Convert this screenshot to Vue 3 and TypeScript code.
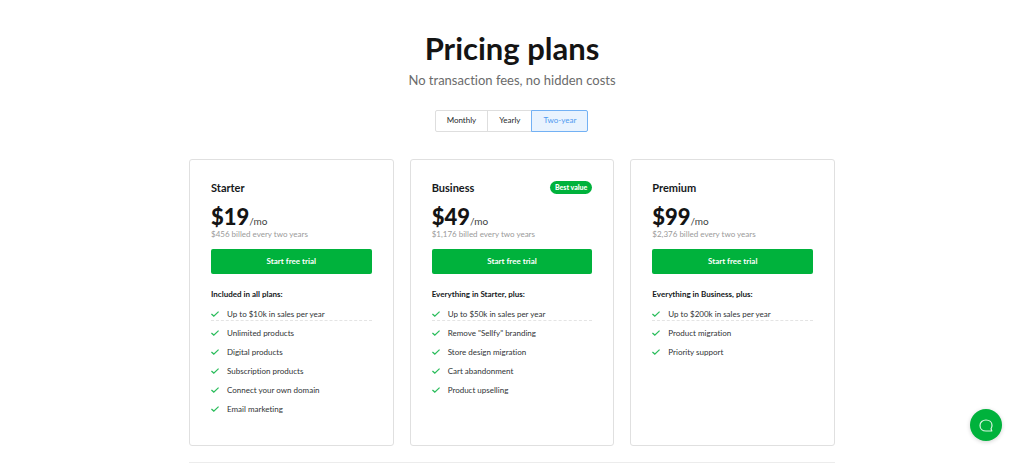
<script setup lang="ts">
import { ref } from 'vue'

interface Plan {
  name: string
  price: string
  billed: string
  badge?: string
  intro: string
  features: string[]
}

const periods: string[] = ['Monthly', 'Yearly', 'Two-year']
const selected = ref<string>('Two-year')

const plans: Plan[] = [
  {
    name: 'Starter',
    price: '$19',
    billed: '$456 billed every two years',
    intro: 'Included in all plans:',
    features: [
      'Up to $10k in sales per year',
      'Unlimited products',
      'Digital products',
      'Subscription products',
      'Connect your own domain',
      'Email marketing',
    ],
  },
  {
    name: 'Business',
    price: '$49',
    billed: '$1,176 billed every two years',
    badge: 'Best value',
    intro: 'Everything in Starter, plus:',
    features: [
      'Up to $50k in sales per year',
      'Remove "Sellfy" branding',
      'Store design migration',
      'Cart abandonment',
      'Product upselling',
    ],
  },
  {
    name: 'Premium',
    price: '$99',
    billed: '$2,376 billed every two years',
    intro: 'Everything in Business, plus:',
    features: ['Up to $200k in sales per year', 'Product migration', 'Priority support'],
  },
]
</script>

<template>
  <main class="pricing">
    <h1 class="title">Pricing plans</h1>
    <p class="subtitle">No transaction fees, no hidden costs</p>

    <div class="periods" role="group" aria-label="Billing period">
      <button
        v-for="period in periods"
        :key="period"
        type="button"
        class="period"
        :class="{ active: period === selected }"
        :aria-pressed="period === selected"
        @click="selected = period"
      >{{ period }}</button>
    </div>

    <div class="plans">
      <section v-for="plan in plans" :key="plan.name" class="card">
        <header class="card-head">
          <h2 class="name">{{ plan.name }}</h2>
          <span v-if="plan.badge" class="badge">{{ plan.badge }}</span>
        </header>
        <p class="price"><strong class="amount">{{ plan.price }}</strong><span class="unit">/mo</span></p>
        <p class="billed">{{ plan.billed }}</p>
        <button type="button" class="trial">Start free trial</button>
        <h3 class="intro">{{ plan.intro }}</h3>
        <ul class="features">
          <li v-for="feature in plan.features" :key="feature" class="feature">
            <svg class="check" viewBox="0 0 8 7" aria-hidden="true">
              <path d="M0.4 3 L2.8 5.1 L7.6 0.6" />
            </svg>
            <span>{{ feature }}</span>
          </li>
        </ul>
      </section>
    </div>
  </main>

  <button type="button" class="chat" aria-label="Open chat">
    <svg class="chat-icon" viewBox="0 0 14 13" aria-hidden="true">
      <path d="M12.8 12 H7 C3.6 12 1 9.8 1 6.4 C1 3.2 3.6 1 7 1 C10.4 1 13 3.2 13 6.2 C13 7.6 12.7 8.8 12 9.8 Z" />
    </svg>
  </button>
</template>

<style>
body {
  background: #fff;
}
</style>

<style scoped>
.pricing,
.chat {
  font-family: Lato, "Liberation Sans", sans-serif;
  font-variant-ligatures: none;
}

.pricing {
  max-width: 646px;
  margin: 0 auto;
  padding: 28px 16px 0;
  color: #16191b;
}

.title {
  margin: 0;
  font-size: 31px;
  line-height: 40px;
  font-weight: 700;
  color: #141414;
  text-align: center;
}

.subtitle {
  margin: 0;
  padding-top: 2px;
  font-size: 13px;
  line-height: 20px;
  color: #6b6b6b;
  text-align: center;
}

.periods {
  display: flex;
  justify-content: center;
  margin-top: 20px;
}

.period {
  height: 22px;
  margin: 0 0 0 -1px;
  padding: 0 11px 2px;
  border: 1px solid #dedede;
  background: #fff;
  color: #26292b;
  font: inherit;
  font-size: 8px;
  cursor: pointer;
}

.period:first-child {
  border-radius: 2px 0 0 2px;
}

.period:last-child {
  border-radius: 0 2px 2px 0;
}

.period.active {
  border-color: #73b1f4;
  background: #e9f3fe;
  color: #4f9af0;
}

.plans {
  display: grid;
  grid-template-columns: repeat(3, 1fr);
  gap: 16px;
  margin-top: 27px;
}

.card {
  padding: 21px 21px 26px;
  border: 1px solid #e0e0e0;
  border-radius: 3px;
}

.card-head {
  display: flex;
  align-items: center;
  justify-content: space-between;
  height: 13px;
}

.name {
  margin: 0;
  font-size: 11px;
  line-height: 13px;
  font-weight: 700;
}

.badge {
  padding: 0 5px;
  border-radius: 7px;
  background: #00b23c;
  color: #fff;
  font-size: 7px;
  line-height: 13px;
  font-weight: 900;
}

.price {
  display: flex;
  align-items: baseline;
  margin: 11px 0 0;
}

.amount {
  font-size: 22px;
  line-height: 24px;
  font-weight: 900;
  color: #141414;
}

.unit {
  font-size: 10px;
  line-height: 12px;
  color: #3c3f41;
}

.billed {
  margin: 0;
  font-size: 8px;
  line-height: 10px;
  color: #9a9a9a;
}

.trial {
  display: block;
  width: 100%;
  height: 25px;
  margin: 10px 0 0;
  padding: 0 0 1px;
  border: 0;
  border-radius: 2px;
  background: #00b23c;
  color: #fff;
  font: inherit;
  font-size: 8px;
  font-weight: 700;
  cursor: pointer;
}

.intro {
  margin: 15px 0 0;
  font-size: 8px;
  line-height: 10px;
  font-weight: 700;
}

.features {
  margin: 9px 0 0;
  padding: 0;
  list-style: none;
}

.feature {
  display: flex;
  align-items: center;
  gap: 8px;
  font-size: 8px;
  line-height: 19px;
  color: #303335;
}

.feature:first-child {
  margin-bottom: 3px;
  border-bottom: 1px dashed #e4e4e4;
  line-height: 12px;
}

.check {
  width: 8px;
  height: 7px;
  fill: none;
  stroke: #2bbd5c;
  stroke-width: 1.3;
}

.pricing::after {
  content: "";
  display: block;
  margin-top: 16px;
  border-top: 1px solid #ececec;
}

.chat {
  position: fixed;
  right: 22px;
  bottom: 22px;
  display: flex;
  align-items: center;
  justify-content: center;
  width: 32px;
  height: 32px;
  padding: 0;
  border: 0;
  border-radius: 50%;
  background: #00b23c;
  box-shadow: 0 1px 4px rgba(0, 0, 0, 0.18);
  cursor: pointer;
}

.chat-icon {
  width: 14px;
  height: 13px;
  fill: none;
  stroke: #d9f5e1;
  stroke-width: 1.2;
  stroke-linejoin: round;
}
</style>
